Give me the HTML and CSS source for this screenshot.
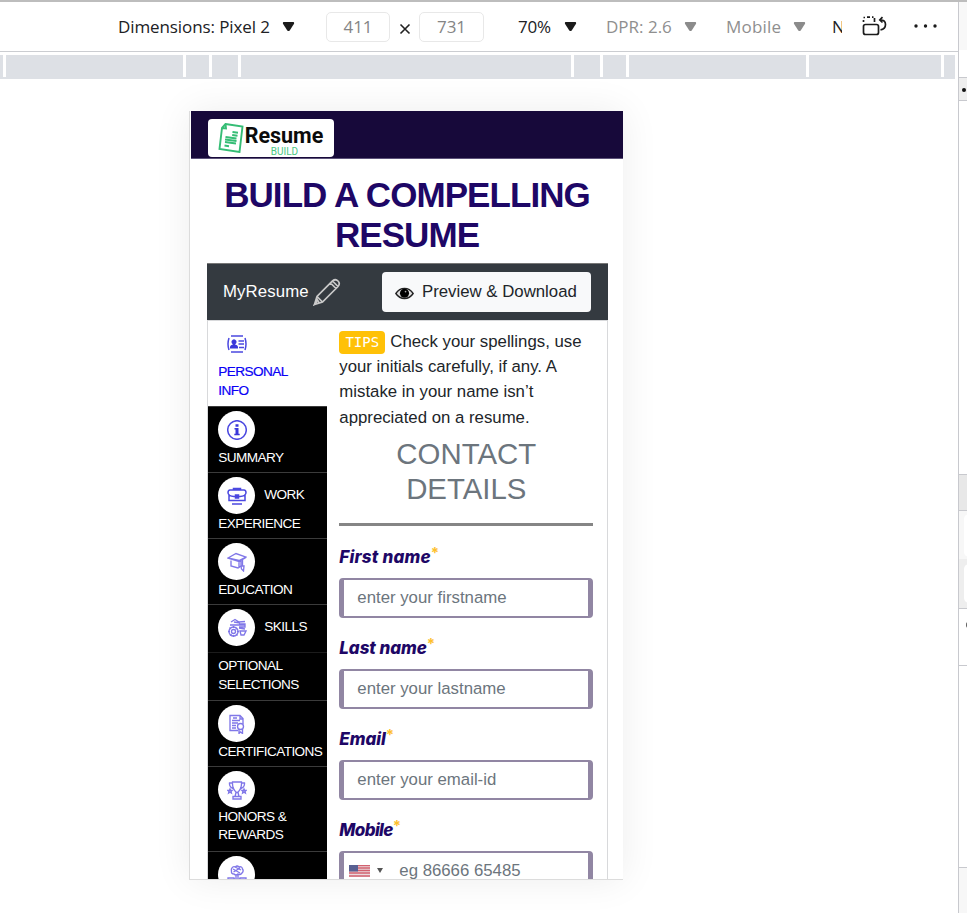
FILE: index.html
```html
<!DOCTYPE html>
<html lang="en">
<head>
<meta charset="utf-8">
<title>Resume Build</title>
<link rel="stylesheet" href="styles.css">
</head>
<body>
<div class="window">
  <main class="emulator">
    <div class="toolbar">
      <span class="tool dims">Dimensions: Pixel 2</span><svg class="caret" viewBox="0 0 13 11"><path d="M1 0H12Q13 0 12.6 2L8 9Q6.500 11 5 9L.4 2Q0 0 1 0Z"/></svg>
      <span class="size first">411</span>
      <svg class="times" viewBox="0 0 12 12"><path d="M1.500 1.500 10.500 10.500M10.500 1.500 1.500 10.500"/></svg>
      <span class="size">731</span>
      <span class="tool zoom">70%</span><svg class="caret" viewBox="0 0 13 11"><path d="M1 0H12Q13 0 12.6 2L8 9Q6.500 11 5 9L.4 2Q0 0 1 0Z"/></svg>
      <span class="tool dpr">DPR: 2.6</span><svg class="caret dim" viewBox="0 0 13 11"><path d="M1 0H12Q13 0 12.6 2L8 9Q6.500 11 5 9L.4 2Q0 0 1 0Z"/></svg>
      <span class="tool mobile">Mobile</span><svg class="caret dim" viewBox="0 0 13 11"><path d="M1 0H12Q13 0 12.6 2L8 9Q6.500 11 5 9L.4 2Q0 0 1 0Z"/></svg>
      <span class="tool network">N</span>
      <svg class="rotate" viewBox="0 0 26 20"><rect x="1.500" y="8.500" width="15" height="10" rx="2"/><path d="M1.500 6V4M1.500 1.500H3M5 1.200H8M10 1.200H11.500M12.500 2V6M20.500 1.200 17.800 4 20.500 6.500M18.500 4Q23.500 4 23.500 8.500Q23.500 13 18.500 13.800"/></svg>
      <svg class="more" viewBox="0 0 24 4"><circle cx="2" cy="2" r="1.700"/><circle cx="11.500" cy="2" r="1.700"/><circle cx="21" cy="2" r="1.700"/></svg>
    </div>
    <div class="ruler"><i class="s1"></i><i class="s2"></i><i class="s3"></i><i class="s4"></i><i class="s5"></i><i class="s4"></i><i class="s3"></i><i class="s2"></i><i class="s6"></i><i class="s7"></i></div>
    <div class="stage">
      <div class="device">
        <header class="nav">
          <div class="logo">
            <svg class="doc" viewBox="0 0 26 30"><path d="M7.500 1 24.500 3.500 21.500 29 1.500 26 4 5ZM4 5 8 5.500 7.500 1M14.500 9 20 9.700M14.200 12 19.500 12.700M7.500 14 18.500 15.500M7 16.500 18.500 18M7 19 18 20.500M6.500 22.500 11 23.200"/></svg>
            <div class="wordmark"><b>Resume</b><small>BUILD</small></div>
          </div>
        </header>
        <h1><span>BUILD A COMPELLING</span><br><span>RESUME</span></h1>
        <section class="card">
          <div class="card-head">
            <span class="name">MyResume</span>
            <svg class="pencil" viewBox="0 0 28 28"><path d="M1.500 26.500 4 18.500 19.500 3Q22.500.5 25 3Q27.500 5.500 25 8.500L9.500 24ZM4 18.500 9.500 24M17.500 5 23 10.500M19.500 3 25 8.500M1.500 26.500 4.500 22 6 24.500Z"/></svg>
            <button class="preview"><svg class="eye" viewBox="0 0 18 12"><path class="lid" d="M.8 6Q4 1.200 9 1.200Q14 1.200 17.200 6Q14 10.800 9 10.800Q4 10.800 .8 6Z"/><circle cx="9" cy="5.800" r="4.300"/><circle class="glint" cx="10" cy="4.200" r=".8"/></svg><span>Preview &amp; Download</span></button>
          </div>
          <div class="card-body">
            <nav class="side">
              <a class="item active"><span class="badge"><svg class="icon idcard" viewBox="0 0 20 18"><path d="M4 1H16M4 17H16M2 3Q0 9 2 15M18 3Q20 9 18 15"/><path class="fill" d="M3 13.500Q2.500 10 6 9.500Q4 8.500 4.500 6Q7 2.500 9.500 6Q10 8.500 8 9.500Q11.500 10 11 13.500Z"/><path d="M11.500 6H17M11.500 9H17M12 12.500H17"/></svg></span><br>PERSONAL<br>INFO</a>
              <a class="item i66"><span class="badge"><svg class="icon" viewBox="0 0 20 20"><circle cx="10" cy="10" r="9.300"/><path class="fill" d="M8.500 4.200H11.500V6.700H8.500ZM7.500 8H11.500V13.800H12.700V15.300H7.300V13.800H8.500V9.400H7.500Z"/></svg></span><br>SUMMARY</a>
              <a class="item i66"><span class="badge"><svg class="icon" viewBox="0 0 20 20"><path d="M6.500 4V2.500H13.500V4M3 4H17Q19 4 19 7Q18.500 10 13 10.500H7Q1.500 10 1 7Q1 4 3 4ZM2 9V14.500H18V9M8.500 9H11.500V12H8.500ZM5 18H15"/></svg></span><span class="beside">WORK</span><br>EXPERIENCE</a>
              <a class="item i66"><span class="badge"><svg class="icon pale" viewBox="0 0 20 20"><path d="M1 6 9 1.500 19 5 12 8.500ZM1 6 12 9.500 19 5.500M4 8.500V14L11 16 14 14V9M12 9V16M15.500 7V14M14 14H17L16.500 19 14.500 17Z"/></svg></span><br>EDUCATION</a>
              <a class="item i48"><span class="badge"><svg class="icon pale" viewBox="0 0 20 20"><circle cx="6.500" cy="13.500" r="4.500"/><circle cx="6.500" cy="13.500" r="2"/><path d="M6.500 8V10M6.500 17V19M1 13.500H3M10 13.500H12M2.500 9.500 4 11M10 10 8.500 11.500M3 17.500 4.500 16M9 16 10.500 17.500M4 4 8 1.500 12 4 18 3.500M3 7H18M12 6H18V9H12M13 13H19L17 17H14ZM12 10 18 11M7 4 13 5"/></svg></span><span class="beside">SKILLS</span></a>
              <a class="item i48 plain">OPTIONAL<br>SELECTIONS</a>
              <a class="item i66"><span class="badge"><svg class="icon pale" viewBox="0 0 20 20"><path d="M11 16.500H3V1.500H13L16 4.500V10M13 1.500V5H16M6 4H10M5 6.500H13M5 9H11M5 11.500H9M5 14H9"/><circle cx="13.500" cy="12.500" r="3"/><path d="M12 15V19.500L13.500 18 15.500 19.500V15"/></svg></span><br>CERTIFICATIONS</a>
              <a class="item i85"><span class="badge"><svg class="icon pale" viewBox="0 0 20 20"><path d="M5.500 2H14.500Q15 9 10.500 12.500H9.500Q5 9 5.500 2ZM5.500 3H2.500Q2 7 7 9M14.500 3H17.500Q18 7 13 9M9 12.500 8 16.500H12L11 12.500M6 16.500H14V19H6ZM3 9 3.600 10.500H5L4 11.500 4.400 13 3 12.200 1.600 13 2 11.500 1 10.500H2.400ZM17 9 17.600 10.500H19L18 11.500 18.400 13 17 12.200 15.600 13 16 11.500 15 10.500H16.400Z"/></svg></span><br>HONORS &amp;<br>REWARDS</a>
              <a class="item i66"><span class="badge"><svg class="icon pale" viewBox="0 0 20 20"><path d="M5 3Q6 1 8.500 2Q10 0 12 2Q15 1 15.500 4Q17 6 15 8Q13 10.500 11 9Q9 11 7 9Q4 9 4.500 6Q4 4 5 3ZM6 4 13 8M8 2 14 5M6.500 7 13 3M9 10V13M11 10V13M1 13H7V19H1ZM8 14H12V19H8ZM13 13H19V19H13ZM3 16H17"/></svg></span></a>
            </nav>
            <div class="content">
              <p class="tips"><span class="tag">TIPS</span><span>Check your spellings, use</span><br><span>your initials carefully, if any. A</span><br><span>mistake in your name isn’t</span><br><span>appreciated on a resume.</span></p>
              <h2>CONTACT<br>DETAILS</h2>
              <hr>
              <label class="wide"><span>First name</span><sup>*</sup></label>
              <div class="field">enter your firstname</div>
              <label><span>Last name</span><sup>*</sup></label>
              <div class="field">enter your lastname</div>
              <label><span>Email</span><sup>*</sup></label>
              <div class="field">enter your email-id</div>
              <label class="narrow"><span>Mobile</span><sup>*</sup></label>
              <div class="field phone"><svg class="flag" viewBox="0 0 21 12"><rect width="21" height="12" fill="#eadadd"/><path d="M0 .5H21M0 3H21M0 5.500H21M0 8H21M0 11H21" stroke="#d2616f" stroke-width="1.300"/><rect width="9" height="6.500" fill="#596092"/></svg><span class="tri"></span><span>eg 86666 65485</span></div>
            </div>
          </div>
        </section>
      </div>
    </div>
  </main>
  <aside class="panel"><div class="p1"></div><div class="p2"></div><div class="p3"><i></i></div><div class="p4"></div><div class="p5"></div><div class="p6"><i></i></div><div class="p7"><i></i></div><div class="p8"><i></i></div><div class="p9"></div><div class="p10"></div></aside>
</div>
</body>
</html>
```
FILE: styles.css
```css
* { box-sizing: border-box; }
body { margin: 0; background: #fff; font-family: "Liberation Sans", Arial, sans-serif; color: #212529; }
.window { display: flex; width: 967px; height: 913px; overflow: hidden; border-top: 2px solid #bdbdbd; }
.emulator { width: 958px; height: 911px; overflow: hidden; }

/* toolbar */
.toolbar { display: flex; align-items: center; height: 50px; padding-left: 118px; border-bottom: 1px solid #cbcdd1; font: 17px/24px "Open Sans", "Noto Sans", sans-serif; color: #202124; }
.toolbar > * { flex: none; }
.tool { white-space: nowrap; overflow: hidden; }
.dims { width: 164px; letter-spacing: -.1px; }
.caret { width: 13px; height: 10px; fill: #1b1b1b; margin-bottom: -1px; }
.caret.dim { fill: #8b8b8b; }
.size { width: 65px; height: 30px; border: 1px solid #e8e8e8; border-radius: 5px; text-align: center; line-height: 28px; color: #858585; }
.size.first { margin-left: 31px; width: 64px; }
.times { width: 12px; height: 12px; margin: 5px 8px 0 9px; stroke: #222; stroke-width: 1.600; }
.zoom { width: 46px; margin-left: 34px; letter-spacing: -.2px; }
.dpr { width: 78px; margin-left: 29px; color: #8f8f8f; }
.mobile { width: 67px; margin-left: 29px; color: #8f8f8f; letter-spacing: .2px; }
.network { width: 9px; margin-left: 27px; text-indent: -1px; }
.rotate { width: 26px; height: 20px; margin: -1px 0 0 20px; fill: none; stroke: #1b1b1b; stroke-width: 1.700; }
.more { width: 24px; height: 4px; margin: -2px 0 0 26px; fill: #1b1b1b; }

.ruler { display: flex; gap: 3px; height: 24px; margin-top: 3px; width: 955px; border-bottom: 2px solid #dde0e5; }
.ruler i { background: #dde0e5; }
.s1 { width: 3px; } .s2 { width: 177px; } .s3 { width: 23px; } .s4 { width: 26px; } .s5 { width: 330px; } .s6 { width: 132px; } .s7 { width: 11px; }

.stage { padding: 32px 0 0 189px; height: 840px; }
.device { width: 434px; height: 769px; overflow: hidden; background: #fff; border-left: 1px solid #dcdcdc; border-bottom: 1px solid #dcdcdc; padding-left: 1px; box-shadow: 0 0 36px rgba(0,0,0,.075); }
.nav { height: 48px; background: #17093a; border-bottom: 1px solid #5d537a; padding: 8px 0 0 17px; }
.logo { display: flex; width: 126px; height: 38px; background: #fff; border-radius: 4px; padding: 4px 0 0 10px; }
.doc { width: 26px; height: 30px; fill: none; stroke: #35bd75; stroke-width: 1.900; }
.wordmark { display: flex; flex-direction: column; width: 78px; margin-left: 1px; align-items: center; font-family: Roboto, sans-serif; }
.wordmark b { font-size: 21.500px; line-height: 22px; margin-top: 2px; color: #0b0b0b; }
.wordmark small { font-size: 10px; line-height: 10px; color: #4bc783; padding-left: 1px; }

h1 { height: 80px; margin: 16px 0 8px; font-size: 35px; line-height: 40px; text-align: center; color: #1e0766; letter-spacing: -.93px; white-space: nowrap; }
.card { width: 401px; margin-left: 16px; border: 1px solid #d8d9db; height: 700px; }
.card-head { display: flex; align-items: center; height: 58px; margin: -1px -1px 0; background: #343a40; padding: 0 17px 0 16px; border-bottom: 1px solid #d8d9db; border-top: 1px solid #777; }
.name { color: #fff; font-size: 16.800px; width: 90px; letter-spacing: .1px; }
.pencil { width: 28px; height: 28px; fill: none; stroke: #c9c9c9; stroke-width: 1.700; }
.preview { display: flex; align-items: center; width: 209px; height: 40px; margin-left: auto; border: 0; border-radius: 4px; background: #f8f9fa; padding: 0 0 0 13px; font: 16.800px "Liberation Sans", sans-serif; color: #212529; white-space: nowrap; }
.eye { width: 19px; height: 13px; margin: 2px 8px 0 0; }
.eye .lid { fill: #ddd; stroke: #222; stroke-width: 1.300; }
.eye .glint { fill: #aaa; }
.card-body { display: flex; }

/* section navigation */
.side { width: 119px; }
.item { display: block; background: #000; color: #fff; font-size: 13.600px; line-height: 19px; padding: 4px 0 0 10.300px; border-top: 1px solid #3b3b3b; white-space: nowrap; letter-spacing: -.57px; }
.item.active { height: 85px; background: #fff; color: #0900f5; border: 0; -webkit-text-stroke: .2px #0900f5; }
.i66 { height: 66px; } .i48 { height: 48px; } .i85 { height: 85px; line-height: 18px; }
.plain { padding-top: 3px; border-color: #1c1c1c; }
.badge { display: inline-flex; width: 37px; height: 37px; border-radius: 50%; background: #fff; align-items: center; justify-content: center; vertical-align: top; }
.icon { width: 20px; height: 20px; fill: none; stroke: #4b48e0; stroke-width: 1.500; }
.icon.pale { stroke: #8077e8; stroke-width: 1.350; }
.icon .fill { fill: #3a37da; stroke: none; }
.beside { margin-left: 9px; line-height: 35px; }

.content { width: 254px; margin-left: 12.300px; padding-top: 8px; }
.tips { height: 102px; margin: 0; font-size: 16.800px; line-height: 25.200px; white-space: nowrap; }
.tag { display: inline-block; width: 46px; height: 23px; margin-right: 5px; border-radius: 4px; background: #ffc107; color: #fff; text-align: center; font: 14px/23px "DejaVu Sans Mono", monospace; }
h2 { height: 70px; margin: 5px 0 17px; font-weight: 400; font-size: 29.400px; line-height: 35px; text-align: center; color: #6c757d; }
hr { height: 3px; border: 0; margin: 0 0 19px; background: #858585; }
label { display: flex; height: 24px; font: italic 800 17px/24px Inter, sans-serif; color: #1e0766; white-space: nowrap; letter-spacing: -.05px; }
label.wide { letter-spacing: .2px; }
label.narrow { letter-spacing: -.6px; }
label sup { font: 700 15px/16px Inter, sans-serif; color: #fdbf2d; }
.field { display: flex; align-items: center; height: 40px; margin: 9px 0 18px; border: solid #9186a3; border-width: 2px 5px; border-radius: 4px; padding: 0 0 1px 13px; font-size: 16.800px; color: #6c757d; white-space: nowrap; }
.phone { padding-left: 5px; }
.flag { width: 21px; height: 12px; margin-right: 7px; }
.tri { border: solid transparent; border-width: 5px 3.500px 0; border-top-color: #555; margin-right: 16px; }

/* docked panel edge */
.panel { width: 9px; height: 911px; border-left: 1px solid #c8c9ce; overflow: hidden; }
.panel div { overflow: hidden; }
.p1 { height: 48px; background: #f8f8f8; } .p2 { height: 27px; background: #fff; }
.p3 { height: 24px; background: #eee; border: solid #c8c9ce; border-width: 1px 0; padding: 10px 0 0 3px; }
.p3 i { display: block; width: 4px; height: 4px; border-radius: 50%; background: #111; }
.p4 { height: 373px; } .p5 { height: 37px; background: #e8e8e8; border: solid #c8c9ce; border-width: 1px 0; }
.p6 { height: 48px; background: #f7f7f7; padding: 3px 0 0 5px; } .p7 { height: 50px; background: #eee; border-bottom: 1px solid #c8c9ce; padding: 5px 0 0 5px; }
.p6 i, .p7 i { display: block; width: 12px; height: 43px; background: #fff; border-radius: 5px; } .p7 i { height: 39px; }
.p8 { height: 57px; border-bottom: 1px solid #c8c9ce; padding: 13px 0 0 7px; }
.p8 i { display: block; width: 5px; height: 6px; border-radius: 3px; background: #666; }
.p9 { height: 201px; } .p10 { height: 46px; background: #f7f7f7; border-top: 1px solid #c8c9ce; }
```
